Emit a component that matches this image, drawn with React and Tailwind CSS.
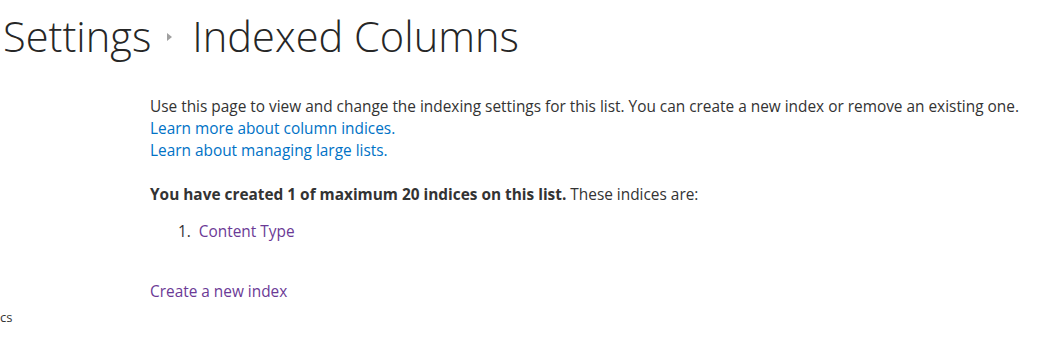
export default function App() {
  return (
    <div className="w-[1049px] h-[349px] bg-white text-[#333333] font-['Open_Sans',sans-serif] overflow-hidden">
      <h1 className="flex items-center pl-[3px] pt-[14px] h-[60px] text-[41.6px] font-light text-[#262626] leading-none">
        <span>Settings</span>
        <span className="ml-[16px] mr-[20px] w-0 h-0 border-y-[4px] border-y-transparent border-l-[5px] border-l-[#a0a0a0]" />
        <span>Indexed Columns</span>
      </h1>

      <div className="pl-[150px] pt-[36px] text-[15.4px] leading-[22px]">
        <p>Use this page to view and change the indexing settings for this list. You can create a new index or remove an existing one.</p>
        <a href="#" className="block text-[#0072c6]">Learn more about column indices.</a>
        <a href="#" className="block text-[#0072c6]">Learn about managing large lists.</a>

        <p className="mt-[22px]">
          <b>You have created 1 of maximum 20 indices on this list.</b> These indices are:
        </p>
        <ol className="mt-[15px] pl-[28px] list-decimal list-inside">
          <li>
            <a href="#" className="text-[#6b3a96] ml-[4px]">Content Type</a>
          </li>
        </ol>

        <a href="#" className="block mt-[38px] text-[#6b3a96]">Create a new index</a>
      </div>
      <div className="text-[13px] leading-none mt-[8px]">cs</div>
    </div>
  );
}
